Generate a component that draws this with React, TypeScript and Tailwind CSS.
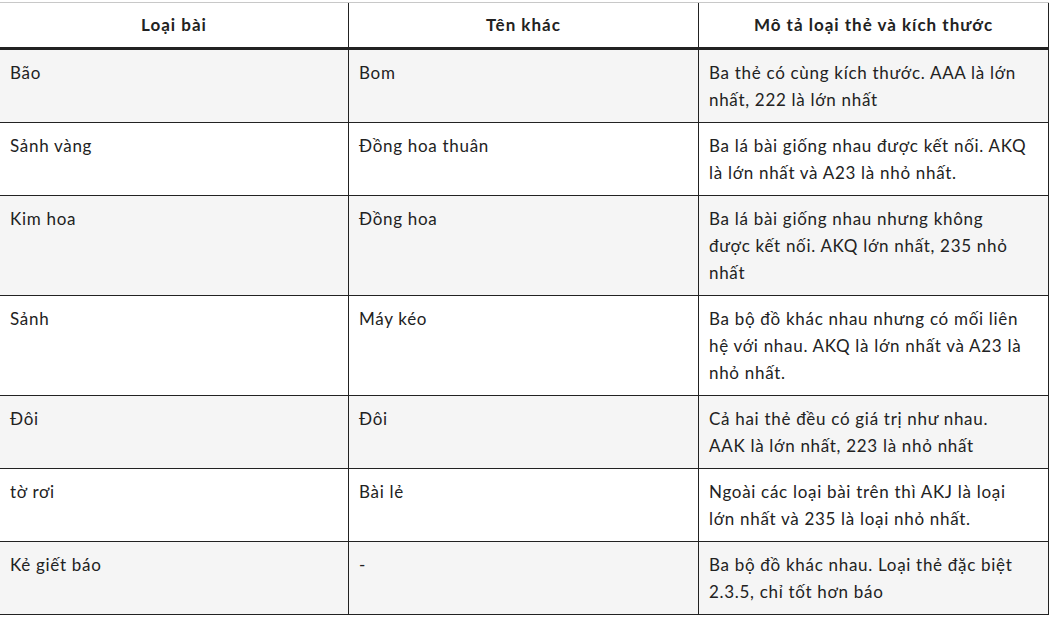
import React from 'react';

const rows: { name: string; alt: string; desc: string[] }[] = [
  { name: 'Bão', alt: 'Bom', desc: ['Ba thẻ có cùng kích thước. AAA là lớn', 'nhất, 222 là lớn nhất'] },
  { name: 'Sảnh vàng', alt: 'Đồng hoa thuân', desc: ['Ba lá bài giống nhau được kết nối. AKQ', 'là lớn nhất và A23 là nhỏ nhất.'] },
  { name: 'Kim hoa', alt: 'Đồng hoa', desc: ['Ba lá bài giống nhau nhưng không', 'được kết nối. AKQ lớn nhất, 235 nhỏ', 'nhất'] },
  { name: 'Sảnh', alt: 'Máy kéo', desc: ['Ba bộ đồ khác nhau nhưng có mối liên', 'hệ với nhau. AKQ là lớn nhất và A23 là', 'nhỏ nhất.'] },
  { name: 'Đôi', alt: 'Đôi', desc: ['Cả hai thẻ đều có giá trị như nhau.', 'AAK là lớn nhất, 223 là nhỏ nhất'] },
  { name: 'tờ rơi', alt: 'Bài lẻ', desc: ['Ngoài các loại bài trên thì AKJ là loại', 'lớn nhất và 235 là loại nhỏ nhất.'] },
  { name: 'Kẻ giết báo', alt: '-', desc: ['Ba bộ đồ khác nhau. Loại thẻ đặc biệt', '2.3.5, chỉ tốt hơn báo'] },
];

const cell =
  'border-r border-b border-[#222] px-[10px] py-[9px] leading-[27px] whitespace-nowrap tracking-[0.7px]';

export default function App() {
  return (
    <div className="min-h-screen bg-white pt-[2px] text-[#222] font-['Lato',sans-serif] text-[17px]">
      <div className="w-[1049px] border-t border-[#c8c8c8] grid grid-cols-[349px_350px_350px]">
        {['Loại bài', 'Tên khác', 'Mô tả loại thẻ và kích thước'].map((h) => (
          <div
            key={h}
            className="h-[47px] border-r border-b-[3px] border-[#222] flex items-center justify-center font-bold tracking-[1px]"
          >
            {h}
          </div>
        ))}
        {rows.map((r, i) => {
          const bg = i % 2 === 0 ? 'bg-[#f5f5f5]' : 'bg-white';
          return (
            <React.Fragment key={r.name}>
              <div className={`${cell} ${bg}`}>{r.name}</div>
              <div className={`${cell} ${bg}`}>{r.alt}</div>
              <div className={`${cell} ${bg}`}>
                {r.desc.map((l, j) => (
                  <div key={j}>{l}</div>
                ))}
              </div>
            </React.Fragment>
          );
        })}
      </div>
    </div>
  );
}
